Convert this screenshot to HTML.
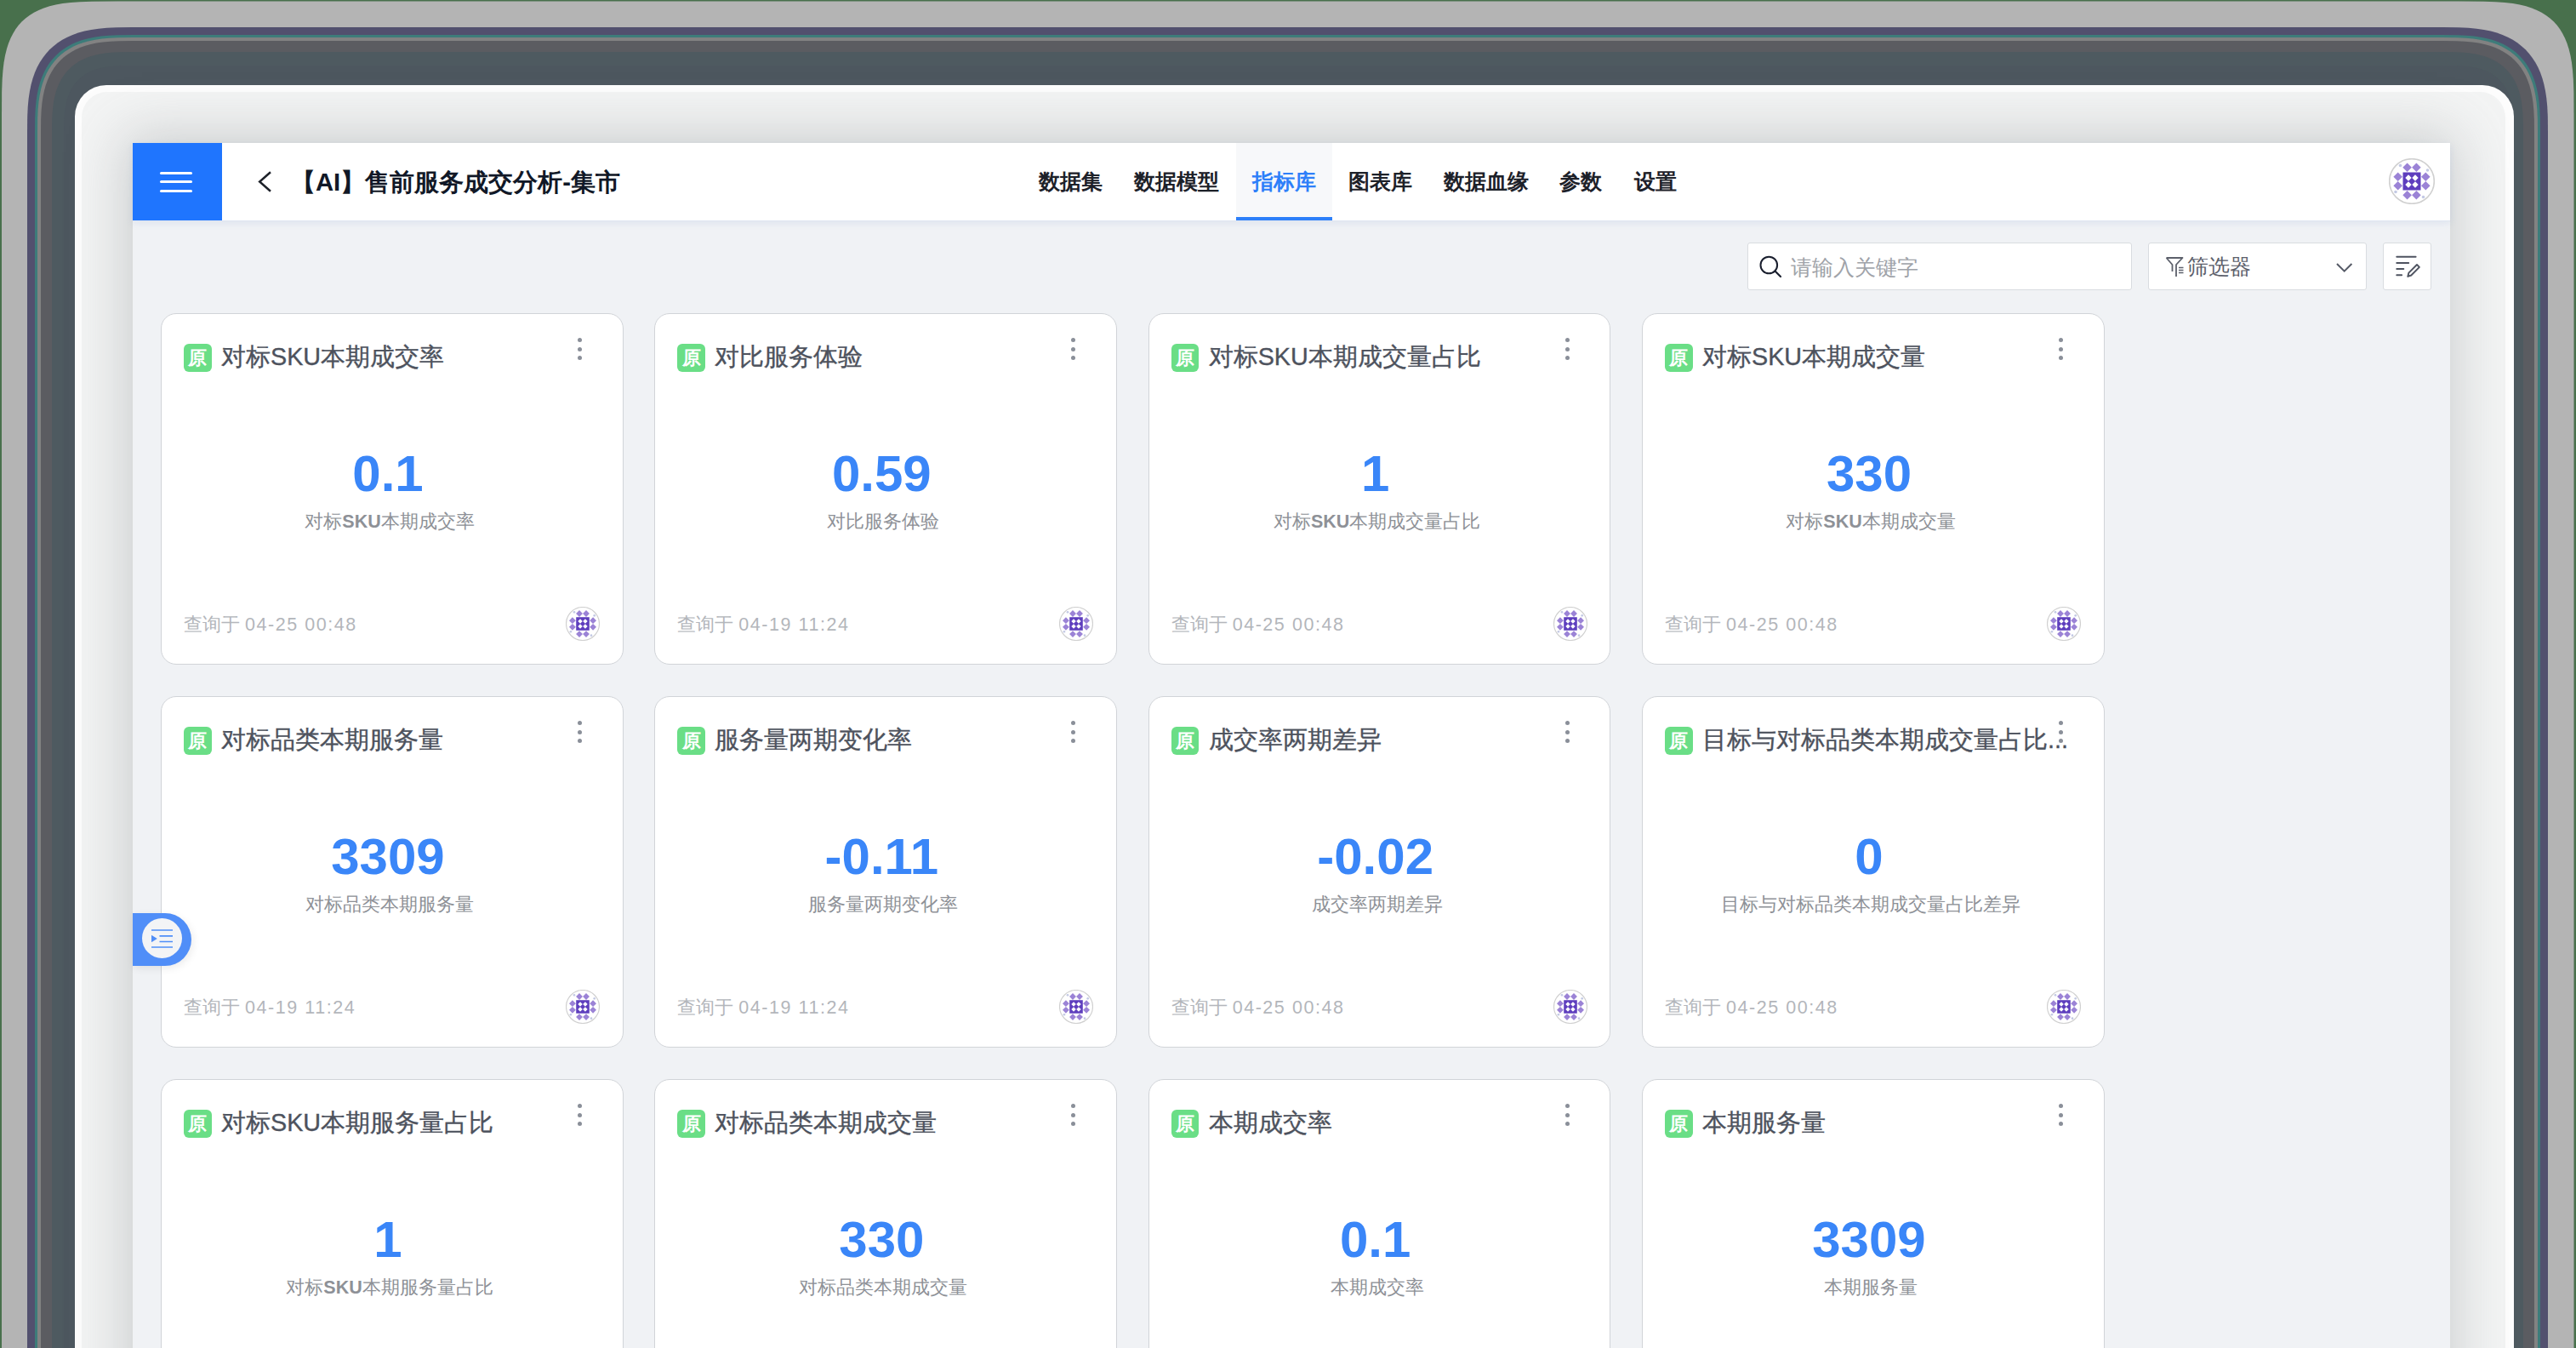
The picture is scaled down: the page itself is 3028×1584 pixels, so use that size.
<!DOCTYPE html>
<html><head><meta charset="utf-8">
<style>
*{box-sizing:border-box;margin:0;padding:0}
html,body{width:3028px;height:1584px;overflow:hidden}
body{position:relative;background:#48704c;font-family:"Liberation Sans",sans-serif;}
.abs{position:absolute}
.l1{left:2px;top:2px;width:3023px;height:2000px;background:#b4b4b4;border-radius:128px}
.l2{left:32px;top:32px;width:2963px;height:2000px;background:#52506e;border-radius:118px}
.l3{left:41px;top:41px;width:2945px;height:2000px;background:#3d7c7a;border-radius:110px}
.l4{left:44px;top:44px;width:2939px;height:2000px;background:#828282;border-radius:106px}
.l5{left:48px;top:48px;width:2931px;height:2000px;background:#5b5c61;border-radius:100px}
.l6{left:61px;top:61px;width:2905px;height:2000px;background:#4e5a60;border-radius:86px}
.l7{left:88px;top:100px;width:2867px;height:2000px;background:#fdfdfd;border-radius:37px}
.l8{left:96px;top:108px;width:2849px;height:2000px;background:#f3f4f4;border-radius:30px;overflow:hidden}
.app{left:156px;top:168px;width:2724px;height:1600px;background:#f0f2f5;box-shadow:-2px -2px 60px 8px rgba(140,145,148,.38)}
.hdr{left:0;top:0;width:2724px;height:90.6px;background:#fff;box-shadow:0 1px 0 #e0e6f1,0 3px 8px rgba(120,150,210,.16)}
.menu{left:0;top:0;width:105px;height:91px;background:#1f75fe}
.menu i{position:absolute;left:32px;width:38px;height:3.4px;border-radius:2px;background:#fff}
.title{left:186px;top:29px;font-size:29.25px;line-height:34px;font-weight:bold;color:#111827;white-space:nowrap}
.tabs{left:0;top:0;height:91px}
.tab{position:absolute;top:0;height:91px;font-size:25px;line-height:91px;color:#1d2129;font-weight:bold;white-space:nowrap}
.tab.on{color:#2d7ff9;background:#f7f8fa}
.tab.on:after{content:"";position:absolute;left:0;right:0;bottom:0;height:4px;background:#2d7ff9}
.box{position:absolute;top:117px;height:56px;background:#fff;border:1.5px solid #d9dce0;border-radius:3px}
.card{position:absolute;width:543.5px;height:413px;background:#fff;border:1.5px solid #d1d4d8;border-radius:18px}
.tag{position:absolute;left:26px;top:34.5px;width:32.6px;height:33px;border-radius:6px;background:#6ade86;color:#fff;font-size:22px;line-height:33px;text-align:center;font-weight:bold}
.ctitle{position:absolute;left:70px;top:33px;font-size:28.75px;line-height:34px;color:#4d525d;white-space:nowrap;-webkit-text-stroke:0.35px #4d525d}
.kebab i{position:absolute;left:489px;width:5px;height:5px;border-radius:50%;background:#8a8f99}
.kebab i:nth-child(1){top:28px}.kebab i:nth-child(2){top:38.7px}.kebab i:nth-child(3){top:48.7px}
.val{position:absolute;left:-2px;width:536px;top:152.5px;text-align:center;font-size:60px;line-height:70px;font-weight:bold;color:#3a86f8}
.sub{position:absolute;left:0;width:536px;top:230px;text-align:center;font-size:21.5px;line-height:28px;color:#8e9197;white-space:nowrap}
.sub b{color:#8e9197}
.foot{position:absolute;left:26px;top:351px;font-size:21.5px;line-height:28px;color:#b3b6bb;white-space:nowrap}
.foot span{letter-spacing:1.55px}
.cav{position:absolute;left:475px;top:344px;width:40px;height:40px}
.av{display:block}
.fab{left:0;top:905px;width:69px;height:62px;background:#508ef8;border-radius:0 31px 31px 0;box-shadow:2px 3px 10px rgba(0,0,0,.08)}
</style></head><body>
<svg width="0" height="0" style="position:absolute">
<defs>
<g id="avt">
<circle cx="27" cy="27" r="26.3" fill="#fff" stroke="#d0d0d0" stroke-width="1.6"/>
<g fill="#9b83d6">
<path d="M21.6 5.5l5.3 5.3-5.3 5.3-5.3-5.3z"/><path d="M32.4 5.5l5.3 5.3-5.3 5.3-5.3-5.3z"/>
<path d="M21.6 38l5.3 5.3-5.3 5.3-5.3-5.3z"/><path d="M32.4 38l5.3 5.3-5.3 5.3-5.3-5.3z"/>
<path d="M10.7 16.5l5.3 5.3-5.3 5.3-5.3-5.3z"/><path d="M10.7 26.9l5.3 5.3-5.3 5.3-5.3-5.3z"/>
<path d="M43.3 16.5l5.3 5.3-5.3 5.3-5.3-5.3z"/><path d="M43.3 26.9l5.3 5.3-5.3 5.3-5.3-5.3z"/>
</g>
<g fill="#c3c9e4"><circle cx="13.5" cy="8.5" r="1.8"/><circle cx="45.5" cy="14" r="1.8"/><circle cx="8" cy="39.5" r="1.8"/><circle cx="40.5" cy="45.5" r="1.8"/></g>
<rect x="16.5" y="16.5" width="21" height="21" fill="#5e3ebe"/>
<g fill="#fff">
<path d="M23 19.3l3.7 3.7-3.7 3.7-3.7-3.7z"/><path d="M31 19.3l3.7 3.7-3.7 3.7-3.7-3.7z"/>
<path d="M23 27.3l3.7 3.7-3.7 3.7-3.7-3.7z"/><path d="M31 27.3l3.7 3.7-3.7 3.7-3.7-3.7z"/>
</g>
</g>
</defs></svg>
<svg class="abs" style="left:0;top:0" width="3028" height="1584" viewBox="0 0 3028 1584"><path fill="#b4b4b4" d="M2,1700 L2,137.5 L2.00,137.50 L2.16,107.61 L2.65,93.62 L3.46,82.64 L4.59,73.32 L6.06,65.11 L7.85,57.74 L9.98,51.06 L12.45,44.97 L15.25,39.39 L18.41,34.27 L21.93,29.59 L25.82,25.32 L30.09,21.43 L34.77,17.91 L39.89,14.75 L45.47,11.95 L51.56,9.48 L58.24,7.35 L65.61,5.56 L73.82,4.09 L83.14,2.96 L94.12,2.15 L108.11,1.66 L138.00,1.50 L2889.50,1.50 L2919.39,1.66 L2933.38,2.15 L2944.36,2.96 L2953.68,4.09 L2961.89,5.56 L2969.26,7.35 L2975.94,9.48 L2982.03,11.95 L2987.61,14.75 L2992.73,17.91 L2997.41,21.43 L3001.68,25.32 L3005.57,29.59 L3009.09,34.27 L3012.25,39.39 L3015.05,44.97 L3017.52,51.06 L3019.65,57.74 L3021.44,65.11 L3022.91,73.32 L3024.04,82.64 L3024.85,93.62 L3025.34,107.61 L3025.50,137.50 L3025.5,1700 Z"/><path fill="#52506e" d="M32,1700 L32,156 L32.00,156.00 L32.18,137.09 L32.73,125.55 L33.65,115.83 L34.93,107.18 L36.58,99.31 L38.59,92.07 L40.97,85.36 L43.71,79.12 L46.82,73.32 L50.30,67.94 L54.14,62.96 L58.36,58.36 L62.96,54.14 L67.94,50.30 L73.32,46.82 L79.12,43.71 L85.36,40.97 L92.07,38.59 L99.31,36.58 L107.18,34.93 L115.83,33.65 L125.55,32.73 L137.09,32.18 L156.00,32.00 L2871.00,32.00 L2889.91,32.18 L2901.45,32.73 L2911.17,33.65 L2919.82,34.93 L2927.69,36.58 L2934.93,38.59 L2941.64,40.97 L2947.88,43.71 L2953.68,46.82 L2959.06,50.30 L2964.04,54.14 L2968.64,58.36 L2972.86,62.96 L2976.70,67.94 L2980.18,73.32 L2983.29,79.12 L2986.03,85.36 L2988.41,92.07 L2990.42,99.31 L2992.07,107.18 L2993.35,115.83 L2994.27,125.55 L2994.82,137.09 L2995.00,156.00 L2995,1700 Z"/><path fill="#3d7c7a" d="M41,1700 L41,156 L41.00,156.00 L41.17,138.47 L41.68,127.76 L42.53,118.74 L43.72,110.72 L45.24,103.43 L47.11,96.71 L49.32,90.48 L51.86,84.70 L54.74,79.32 L57.97,74.33 L61.54,69.71 L65.45,65.45 L69.71,61.54 L74.33,57.97 L79.32,54.74 L84.70,51.86 L90.48,49.32 L96.71,47.11 L103.43,45.24 L110.72,43.72 L118.74,42.53 L127.76,41.68 L138.47,41.17 L156.00,41.00 L2871.00,41.00 L2888.53,41.17 L2899.24,41.68 L2908.26,42.53 L2916.28,43.72 L2923.57,45.24 L2930.29,47.11 L2936.52,49.32 L2942.30,51.86 L2947.68,54.74 L2952.67,57.97 L2957.29,61.54 L2961.55,65.45 L2965.46,69.71 L2969.03,74.33 L2972.26,79.32 L2975.14,84.70 L2977.68,90.48 L2979.89,96.71 L2981.76,103.43 L2983.28,110.72 L2984.47,118.74 L2985.32,127.76 L2985.83,138.47 L2986.00,156.00 L2986,1700 Z"/><path fill="#828282" d="M44,1700 L44,156 L44.00,156.00 L44.17,138.92 L44.66,128.50 L45.49,119.72 L46.65,111.91 L48.13,104.80 L49.95,98.25 L52.10,92.19 L54.58,86.56 L57.39,81.32 L60.53,76.46 L64.00,71.96 L67.81,67.81 L71.96,64.00 L76.46,60.53 L81.32,57.39 L86.56,54.58 L92.19,52.10 L98.25,49.95 L104.80,48.13 L111.91,46.65 L119.72,45.49 L128.50,44.66 L138.92,44.17 L156.00,44.00 L2871.00,44.00 L2888.08,44.17 L2898.50,44.66 L2907.28,45.49 L2915.09,46.65 L2922.20,48.13 L2928.75,49.95 L2934.81,52.10 L2940.44,54.58 L2945.68,57.39 L2950.54,60.53 L2955.04,64.00 L2959.19,67.81 L2963.00,71.96 L2966.47,76.46 L2969.61,81.32 L2972.42,86.56 L2974.90,92.19 L2977.05,98.25 L2978.87,104.80 L2980.35,111.91 L2981.51,119.72 L2982.34,128.50 L2982.83,138.92 L2983.00,156.00 L2983,1700 Z"/><path fill="#5b5c61" d="M48,1700 L48,156 L48.00,156.00 L48.16,139.53 L48.64,129.48 L49.44,121.01 L50.55,113.48 L51.99,106.63 L53.74,100.32 L55.81,94.47 L58.20,89.04 L60.91,83.99 L63.94,79.31 L67.29,74.96 L70.96,70.96 L74.96,67.29 L79.31,63.94 L83.99,60.91 L89.04,58.20 L94.47,55.81 L100.32,53.74 L106.63,51.99 L113.48,50.55 L121.01,49.44 L129.48,48.64 L139.53,48.16 L156.00,48.00 L2871.00,48.00 L2887.47,48.16 L2897.52,48.64 L2905.99,49.44 L2913.52,50.55 L2920.37,51.99 L2926.68,53.74 L2932.53,55.81 L2937.96,58.20 L2943.01,60.91 L2947.69,63.94 L2952.04,67.29 L2956.04,70.96 L2959.71,74.96 L2963.06,79.31 L2966.09,83.99 L2968.80,89.04 L2971.19,94.47 L2973.26,100.32 L2975.01,106.63 L2976.45,113.48 L2977.56,121.01 L2978.36,129.48 L2978.84,139.53 L2979.00,156.00 L2979,1700 Z"/><path fill="#4e5a60" d="M61,1700 L61,156 L61.00,156.00 L61.14,141.52 L61.56,132.67 L62.26,125.22 L63.24,118.60 L64.51,112.57 L66.05,107.02 L67.87,101.88 L69.97,97.10 L72.35,92.66 L75.02,88.54 L77.96,84.72 L81.20,81.20 L84.72,77.96 L88.54,75.02 L92.66,72.35 L97.10,69.97 L101.88,67.87 L107.02,66.05 L112.57,64.51 L118.60,63.24 L125.22,62.26 L132.67,61.56 L141.52,61.14 L156.00,61.00 L2871.00,61.00 L2885.48,61.14 L2894.33,61.56 L2901.78,62.26 L2908.40,63.24 L2914.43,64.51 L2919.98,66.05 L2925.12,67.87 L2929.90,69.97 L2934.34,72.35 L2938.46,75.02 L2942.28,77.96 L2945.80,81.20 L2949.04,84.72 L2951.98,88.54 L2954.65,92.66 L2957.03,97.10 L2959.13,101.88 L2960.95,107.02 L2962.49,112.57 L2963.76,118.60 L2964.74,125.22 L2965.44,132.67 L2965.86,141.52 L2966.00,156.00 L2966,1700 Z"/><path fill="#4d575f" d="M75,1700 L75,157 L75.00,157.00 L75.12,144.80 L75.47,137.36 L76.06,131.08 L76.89,125.50 L77.95,120.43 L79.25,115.75 L80.79,111.42 L82.56,107.40 L84.56,103.66 L86.80,100.19 L89.29,96.97 L92.01,94.01 L94.97,91.29 L98.19,88.80 L101.66,86.56 L105.40,84.56 L109.42,82.79 L113.75,81.25 L118.43,79.95 L123.50,78.89 L129.08,78.06 L135.36,77.47 L142.80,77.12 L155.00,77.00 L2875.00,77.00 L2887.20,77.12 L2894.64,77.47 L2900.92,78.06 L2906.50,78.89 L2911.57,79.95 L2916.25,81.25 L2920.58,82.79 L2924.60,84.56 L2928.34,86.56 L2931.81,88.80 L2935.03,91.29 L2937.99,94.01 L2940.71,96.97 L2943.20,100.19 L2945.44,103.66 L2947.44,107.40 L2949.21,111.42 L2950.75,115.75 L2952.05,120.43 L2953.11,125.50 L2953.94,131.08 L2954.53,137.36 L2954.88,144.80 L2955.00,157.00 L2955,1700 Z"/></svg>
<div class="abs l7"></div><div class="abs l8"></div>
<div class="abs app">
 <div class="abs hdr">
  <div class="abs menu"><i style="top:34px"></i><i style="top:44px"></i><i style="top:54.5px"></i></div>
  <svg class="abs" style="left:145px;top:32px" width="22" height="28" viewBox="0 0 22 28"><path d="M17 2.2L4.2 13.5L17 24.8" fill="none" stroke="#1d2129" stroke-width="2.5"/></svg>
  <div class="abs title">【AI】售前服务成交分析-集市</div>
  <div class="tab" style="left:1065px">数据集</div>
  <div class="tab" style="left:1177px">数据模型</div>
  <div class="tab on" style="left:1297px;padding:0 19px">指标库</div>
  <div class="tab" style="left:1429px">图表库</div>
  <div class="tab" style="left:1541px">数据血缘</div>
  <div class="tab" style="left:1677px">参数</div>
  <div class="tab" style="left:1765px">设置</div>
  <div class="abs" style="left:2651.7px;top:18.3px;width:54px;height:54px"><svg class="av" width="54" height="54" viewBox="0 0 54 54"><use href="#avt"/></svg></div>
 </div>
 <div class="box" style="left:1898px;width:452px">
  <svg class="abs" style="left:12px;top:13px" width="28" height="28" viewBox="0 0 28 28"><circle cx="12.3" cy="12.5" r="9.8" fill="none" stroke="#1a1f2e" stroke-width="2"/><path d="M19.5 19.5l6.5 6.5" stroke="#1a1f2e" stroke-width="2.2" stroke-linecap="round"/></svg>
  <div class="abs" style="left:50px;top:13px;font-size:25px;line-height:30px;color:#a0a3a9;white-space:nowrap">请输入关键字</div>
 </div>
 <div class="box" style="left:2369px;width:257px">
  <svg class="abs" style="left:19px;top:15px" width="26" height="26" viewBox="0 0 26 26"><path d="M1.5 2h19l-7.5 8v14M8.5 18V10L1.5 2" fill="none" stroke="#5c606b" stroke-width="1.8" stroke-linejoin="round"/><path d="M16 13.5h5.5M16 16.5h5.5M16 19.5h5.5" stroke="#5c606b" stroke-width="1.4"/></svg>
  <div class="abs" style="left:45px;top:13px;font-size:24.5px;line-height:30px;color:#5c606b;white-space:nowrap">筛选器</div>
  <svg class="abs" style="left:219px;top:21.7px" width="22" height="14" viewBox="0 0 22 14"><path d="M2 2l8.7 8.7L19.4 2" fill="none" stroke="#555a66" stroke-width="2"/></svg>
 </div>
 <div class="box" style="left:2644.5px;width:57px">
  <svg class="abs" style="left:12px;top:13px" width="34" height="30" viewBox="0 0 34 30"><path d="M3.3 2.8h22.3M3.3 10h13.9M3.3 17h8M3.3 24.2h5.8" stroke="#4e5360" stroke-width="2" stroke-linecap="round"/><path d="M16.3 25.9l1.1-4.3 9.6-9.6 2.9 2.9-9.6 9.6z" fill="none" stroke="#4e5360" stroke-width="1.9" stroke-linejoin="round"/></svg>
 </div>
 <div class="abs" style="left:0;top:0">
<div class="card" style="left:33px;top:200px">
<div class="tag">原</div><div class="ctitle">对标SKU本期成交率</div>
<div class="kebab"><i></i><i></i><i></i></div>
<div class="val">0.1</div><div class="sub">对标<b>SKU</b>本期成交率</div>
<div class="foot">查询于 <span>04-25 00:48</span></div>
<div class="cav"><svg class="av" width="40" height="40" viewBox="0 0 54 54"><use href="#avt"/></svg></div>
</div>
<div class="card" style="left:613.33px;top:200px">
<div class="tag">原</div><div class="ctitle">对比服务体验</div>
<div class="kebab"><i></i><i></i><i></i></div>
<div class="val">0.59</div><div class="sub">对比服务体验</div>
<div class="foot">查询于 <span>04-19 11:24</span></div>
<div class="cav"><svg class="av" width="40" height="40" viewBox="0 0 54 54"><use href="#avt"/></svg></div>
</div>
<div class="card" style="left:1193.67px;top:200px">
<div class="tag">原</div><div class="ctitle">对标SKU本期成交量占比</div>
<div class="kebab"><i></i><i></i><i></i></div>
<div class="val">1</div><div class="sub">对标<b>SKU</b>本期成交量占比</div>
<div class="foot">查询于 <span>04-25 00:48</span></div>
<div class="cav"><svg class="av" width="40" height="40" viewBox="0 0 54 54"><use href="#avt"/></svg></div>
</div>
<div class="card" style="left:1774px;top:200px">
<div class="tag">原</div><div class="ctitle">对标SKU本期成交量</div>
<div class="kebab"><i></i><i></i><i></i></div>
<div class="val">330</div><div class="sub">对标<b>SKU</b>本期成交量</div>
<div class="foot">查询于 <span>04-25 00:48</span></div>
<div class="cav"><svg class="av" width="40" height="40" viewBox="0 0 54 54"><use href="#avt"/></svg></div>
</div>
<div class="card" style="left:33px;top:650px">
<div class="tag">原</div><div class="ctitle">对标品类本期服务量</div>
<div class="kebab"><i></i><i></i><i></i></div>
<div class="val">3309</div><div class="sub">对标品类本期服务量</div>
<div class="foot">查询于 <span>04-19 11:24</span></div>
<div class="cav"><svg class="av" width="40" height="40" viewBox="0 0 54 54"><use href="#avt"/></svg></div>
</div>
<div class="card" style="left:613.33px;top:650px">
<div class="tag">原</div><div class="ctitle">服务量两期变化率</div>
<div class="kebab"><i></i><i></i><i></i></div>
<div class="val">-0.11</div><div class="sub">服务量两期变化率</div>
<div class="foot">查询于 <span>04-19 11:24</span></div>
<div class="cav"><svg class="av" width="40" height="40" viewBox="0 0 54 54"><use href="#avt"/></svg></div>
</div>
<div class="card" style="left:1193.67px;top:650px">
<div class="tag">原</div><div class="ctitle">成交率两期差异</div>
<div class="kebab"><i></i><i></i><i></i></div>
<div class="val">-0.02</div><div class="sub">成交率两期差异</div>
<div class="foot">查询于 <span>04-25 00:48</span></div>
<div class="cav"><svg class="av" width="40" height="40" viewBox="0 0 54 54"><use href="#avt"/></svg></div>
</div>
<div class="card" style="left:1774px;top:650px">
<div class="tag">原</div><div class="ctitle">目标与对标品类本期成交量占比...</div>
<div class="kebab"><i></i><i></i><i></i></div>
<div class="val">0</div><div class="sub">目标与对标品类本期成交量占比差异</div>
<div class="foot">查询于 <span>04-25 00:48</span></div>
<div class="cav"><svg class="av" width="40" height="40" viewBox="0 0 54 54"><use href="#avt"/></svg></div>
</div>
<div class="card" style="left:33px;top:1100px">
<div class="tag">原</div><div class="ctitle">对标SKU本期服务量占比</div>
<div class="kebab"><i></i><i></i><i></i></div>
<div class="val">1</div><div class="sub">对标<b>SKU</b>本期服务量占比</div>
<div class="foot">查询于 <span>04-25 00:48</span></div>
<div class="cav"><svg class="av" width="40" height="40" viewBox="0 0 54 54"><use href="#avt"/></svg></div>
</div>
<div class="card" style="left:613.33px;top:1100px">
<div class="tag">原</div><div class="ctitle">对标品类本期成交量</div>
<div class="kebab"><i></i><i></i><i></i></div>
<div class="val">330</div><div class="sub">对标品类本期成交量</div>
<div class="foot">查询于 <span>04-25 00:48</span></div>
<div class="cav"><svg class="av" width="40" height="40" viewBox="0 0 54 54"><use href="#avt"/></svg></div>
</div>
<div class="card" style="left:1193.67px;top:1100px">
<div class="tag">原</div><div class="ctitle">本期成交率</div>
<div class="kebab"><i></i><i></i><i></i></div>
<div class="val">0.1</div><div class="sub">本期成交率</div>
<div class="foot">查询于 <span>04-25 00:48</span></div>
<div class="cav"><svg class="av" width="40" height="40" viewBox="0 0 54 54"><use href="#avt"/></svg></div>
</div>
<div class="card" style="left:1774px;top:1100px">
<div class="tag">原</div><div class="ctitle">本期服务量</div>
<div class="kebab"><i></i><i></i><i></i></div>
<div class="val">3309</div><div class="sub">本期服务量</div>
<div class="foot">查询于 <span>04-25 00:48</span></div>
<div class="cav"><svg class="av" width="40" height="40" viewBox="0 0 54 54"><use href="#avt"/></svg></div>
</div>
 </div>
 <div class="abs fab">
  <div class="abs" style="left:11px;top:6px;width:47px;height:47px;border-radius:50%;background:#f3f4f6"></div>
  <svg class="abs" style="left:21px;top:18px" width="26" height="24" viewBox="0 0 26 24"><path d="M1 2h25M10.5 8.8h15.5M10.5 15.5h15.5M1 22h25" stroke="#508ef8" stroke-width="1.7"/><path d="M1 7.8l6.8 4.2L1 16.3z" fill="#508ef8"/></svg>
 </div>
</div>
</body></html>
